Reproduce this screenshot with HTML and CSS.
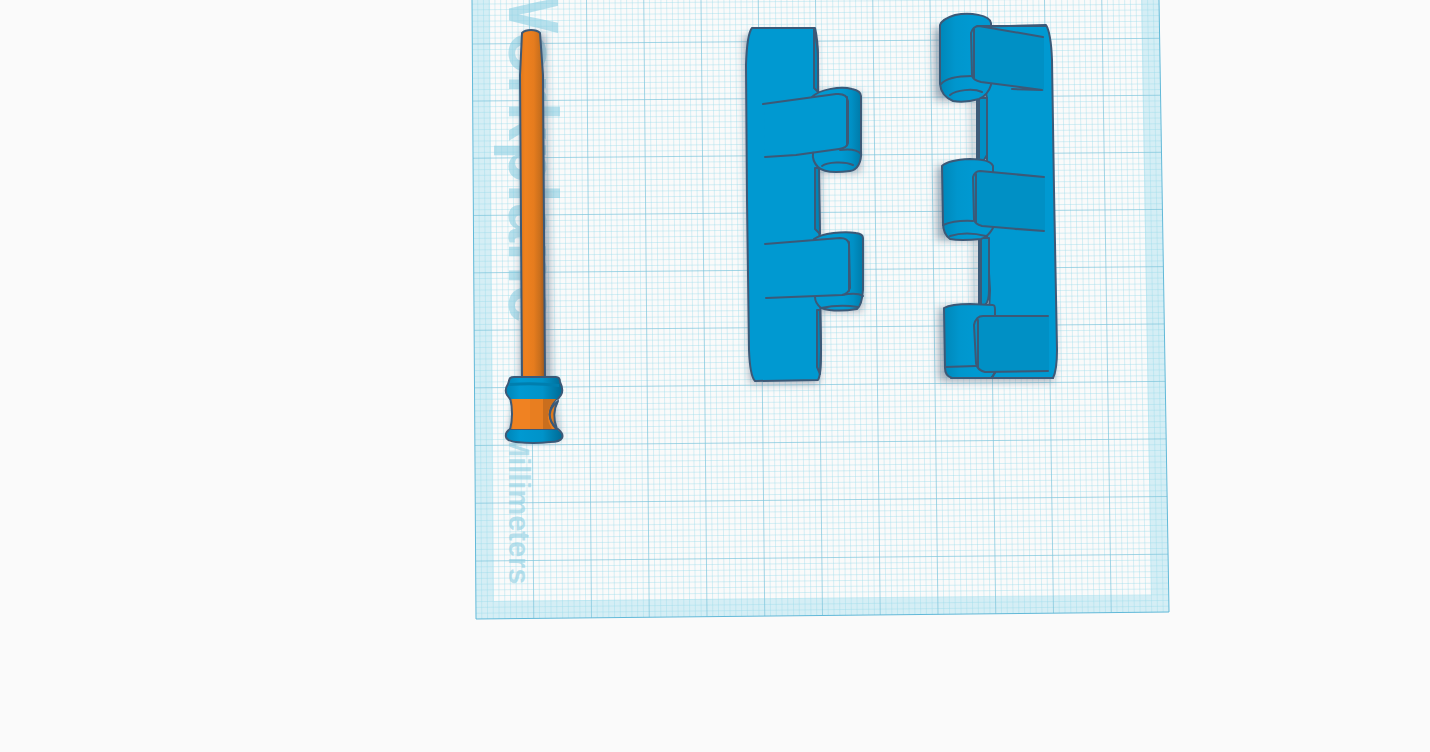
FILE: index.html
```html
<!DOCTYPE html>
<html lang="en">
<head>
<meta charset="utf-8">
<title>Workplane</title>
<link rel="stylesheet" href="styles.css">
</head>
<body>
<main class="viewport">
<svg class="scene" viewBox="0 0 1430 752" preserveAspectRatio="xMidYMin meet" role="img" aria-label="Workplane with three models">
  <defs>
    <filter id="soft" x="-30%" y="-10%" width="160%" height="120%"><feGaussianBlur stdDeviation="4"/></filter>
    <linearGradient id="shaft"><stop offset="0" stop-color="#dd771d"/><stop offset=".2" stop-color="#ee811f"/><stop offset=".55" stop-color="#e67c1e"/><stop offset=".8" stop-color="#c96f1d"/><stop offset="1" stop-color="#98561f"/></linearGradient>
    <linearGradient id="barrelR"><stop offset=".6" stop-color="#0099d1"/><stop offset=".8" stop-color="#0090c5"/><stop offset="1" stop-color="#007aa8"/></linearGradient>
    <linearGradient id="barrelL"><stop offset="0" stop-color="#0087b9"/><stop offset=".3" stop-color="#0096cd"/><stop offset=".6" stop-color="#0099d1"/></linearGradient>
    <linearGradient id="ring"><stop offset="0" stop-color="#0084b6"/><stop offset=".25" stop-color="#0099d1"/><stop offset=".65" stop-color="#0093c9"/><stop offset="1" stop-color="#006a94"/></linearGradient>
  </defs>

  <path class="band" d="M472 0H1159L1169 612 476 619Z"/>
  <path class="field" d="M490 0H1141L1151 595 494 601Z"/>
  <path id="minor" class="minor"/>
  <path id="major" class="major"/>
  <path class="edge" d="M472 0 476 619 1169 612 1159 0"/>

  <text class="label title" transform="translate(509 -33) rotate(90)">Workplane</text>
  <text class="label unit" transform="translate(509 433) rotate(90)">Millimeters</text>

  <g class="shadow" filter="url(#soft)">
    <path d="M523 34H545L551 380 560 440H508L520 378Z"/>
    <path d="M744 36H815V92H860V172H820V238H862V311H820L819 383H750Z"/>
    <path d="M934 28H990V100H976V166H992V240H978V306H1054V381H939V308H974V240H937V166H972V100H935Z"/>
  </g>

  <g class="line">
    <path class="blue" d="M752 28 815 28Q818 40 818 60L819 200 821 350Q821 376 818 380L755 381Q750 376 749 350L747 200 746 65Q747 34 752 28Z"/>
    <path class="side" d="M814 29Q818 45 818 60V92L814 88ZM815 168H819L820 234 815 229ZM817 310H820L821 350 820 374 817 367Z"/>
    <path fill="url(#barrelR)" d="M812 97C820 89 841 86 852 89Q861 91 861 96V150C862 163 857 170 850 171 836 173 823 172 818 167Q812 161 813 153Z"/>
    <path d="M840 150Q856 148 861 154M822 166C827 162 845 161 853 165"/>
    <path class="cover" d="M764 104 836 94Q847 93 848 101V143Q847 148 839 149L765 157Z"/>
    <path d="M763 104 836 94Q847 93 848 101V143Q847 148 839 149L796 155 765 157M847 97 847 145"/>
    <path fill="url(#barrelR)" d="M814 239C822 233 844 231 856 233Q863 234 863 238V290Q862 305 857 309C845 311 830 311 821 308Q815 303 815 297Z"/>
    <path d="M842 295Q857 292 863 296M821 308Q840 304 858 307"/>
    <path class="cover" d="M766 244 840 238Q848 238 849 244L850 288Q848 294 842 295L766 298Z"/>
    <path d="M765 244 840 238Q848 238 849 244L850 288Q848 294 842 295L766 298M849 242 849 291"/>
  </g>

  <g class="line">
    <path class="blue" d="M971 27 1046 25Q1051 33 1052 60L1054 190 1057 350Q1057 370 1053 378H986L990 290 987 240V98Z"/>
    <path class="strip" d="M977 98H987V155L984 160H977ZM979 238H989V290Q989 302 985 305H979Z"/>
    <path d="M979 99 979 158M981 239 981 304"/>
    <path fill="url(#barrelL)" d="M940 25Q942 19 955 15C970 12 990 15 991 23V85Q988 95 979 99 965 103 953 101 941 96 940 84Z"/>
    <path d="M941 84Q948 76 972 76M950 95C956 90 973 88 982 92"/>
    <path class="top" d="M979 26 1044 37V91L981 82Q973 80 972 76L971 33Q973 26 979 26Z"/>
    <path d="M1043 37 979 26Q973 26 971 33L972 76Q973 80 981 82L1042 90 1012 89M974 29V78M977 26H1046"/>
    <path fill="url(#barrelL)" d="M942 166Q948 160 970 159 990 159 993 166V228Q988 237 981 239 960 241 950 239 943 234 943 223Z"/>
    <path d="M943 225Q955 220 973 221M950 236Q966 231 986 236"/>
    <path class="top" d="M980 171 1045 177V231L982 226Q975 224 974 220L973 177Q975 171 980 171Z"/>
    <path d="M1044 177 980 171Q975 171 973 177L974 220Q975 224 982 226L1044 231 1015 229M976 174V223"/>
    <path fill="url(#barrelL)" d="M944 308Q951 304 970 304L993 305Q995 305 995 310V372L992 378H952Q945 376 945 368Z"/>
    <path d="M945 367 976 366M951 378H1053M995 373 991 378"/>
    <path class="top" d="M983 316H1049V371L985 372Q977 370 976 363L974 325Q976 316 983 316Z"/>
    <path d="M1048 316H983Q976 316 974 325L976 363Q977 370 985 372L1048 371M978 320V367"/>
  </g>

  <g class="line">
    <path fill="url(#shaft)" d="M522 33Q525 30 531 30T540 33L543 75 545 379H522L520 75Z"/>
    <path fill="#e87e20" d="M510 397H558Q542 414 557 430H510Q514 414 510 397Z"/>
    <path class="facetLight" d="M513 399H530V429H513Z"/>
    <path class="facet" d="M543 399H556Q542 414 552 429H543Z"/>
    <path fill="#df791d" d="M558 401Q542 414 557 429 551 414 558 401Z"/>
    <path fill="url(#ring)" stroke="none" d="M509 381Q509 377 514 377H556Q560 377 560 382 564 390 561 395L558 399H510L507 395Q504 390 508 384Z"/>
    <path d="M510 399 507 395Q504 390 508 384L509 381Q509 377 514 377H556Q560 377 560 382 564 390 561 395L558 399"/>
    <path class="shade" d="M510 383Q535 381 559 384V387Q535 384 509 386Z"/>
    <path fill="url(#ring)" stroke="none" d="M510 430H558Q564 434 562 438 560 442 550 442 534 444 516 442 507 441 506 437 505 432 510 430Z"/>
    <path d="M510 429Q505 432 506 437 507 441 516 442 534 444 550 442 560 442 562 438 564 434 558 429"/>
  </g>
</svg>
</main>
<script src="grid.js"></script>
</body>
</html>
```

FILE: styles.css
```css
body {
  margin: 0;
  background: #fafafa;
}

.viewport {
  overflow: hidden;
}

.scene {
  display: block;
  width: 100%;
  height: auto;
}

.band {
  fill: #d5eef5;
}

.field {
  fill: #fafafa;
}

.minor,
.major,
.edge {
  fill: none;
}

.minor {
  stroke: #9bdcec;
  stroke-opacity: 0.4;
}

.major {
  stroke: #7cc5dc;
  stroke-opacity: 0.7;
}

.edge {
  stroke: #62b9d8;
}

.label {
  fill: #8bcee2;
  fill-opacity: 0.6;
  font-family: "Liberation Sans", Arial, sans-serif;
  font-weight: bold;
}

.title {
  font-size: 70px;
}

.unit {
  font-size: 29px;
}

.shadow {
  fill: #5f7288;
  opacity: 0.6;
}

.line {
  fill: none;
  stroke: #3c5977;
  stroke-width: 2;
  stroke-linejoin: round;
  stroke-linecap: round;
}

.blue {
  fill: #0099d1;
}

.cover {
  fill: #0099d1;
  stroke: none;
}

.side {
  fill: #0084b7;
}

.strip {
  fill: #0090c5;
}

.top {
  fill: #0090c5;
  stroke: none;
}

.facetLight {
  fill: #f08222;
  stroke: none;
}

.facet {
  fill: #ca6e1d;
  stroke: none;
}

.shade {
  fill: #007eae;
  stroke: none;
}
```

FILE: grid.js
```js
// Ten divisions per major square, drawn in slight perspective.
const minor = [];
const major = [];

for (let i = 1; i < 120; i++) {
  const top = 472 + 5.725 * i;
  const bottom = 476 + 5.775 * i;
  const target = i % 10 ? minor : major;
  target.push(`M${top} 0L${bottom} ${619 - i * 7 / 120}`);
}

for (let j = 1; j < 110; j++) {
  const n = j / 10;
  const left = 619 - 57.98 * n + 0.048 * n * n;
  const right = left - 7 + 0.13 * n;
  const leftX = 472 + left * 4 / 619;
  const rightX = 1159 + right * 10 / 612;
  const target = j % 10 ? minor : major;
  target.push(`M${leftX} ${left}L${rightX} ${right}`);
}

document.getElementById("minor").setAttribute("d", minor.join(""));
document.getElementById("major").setAttribute("d", major.join(""));
```
